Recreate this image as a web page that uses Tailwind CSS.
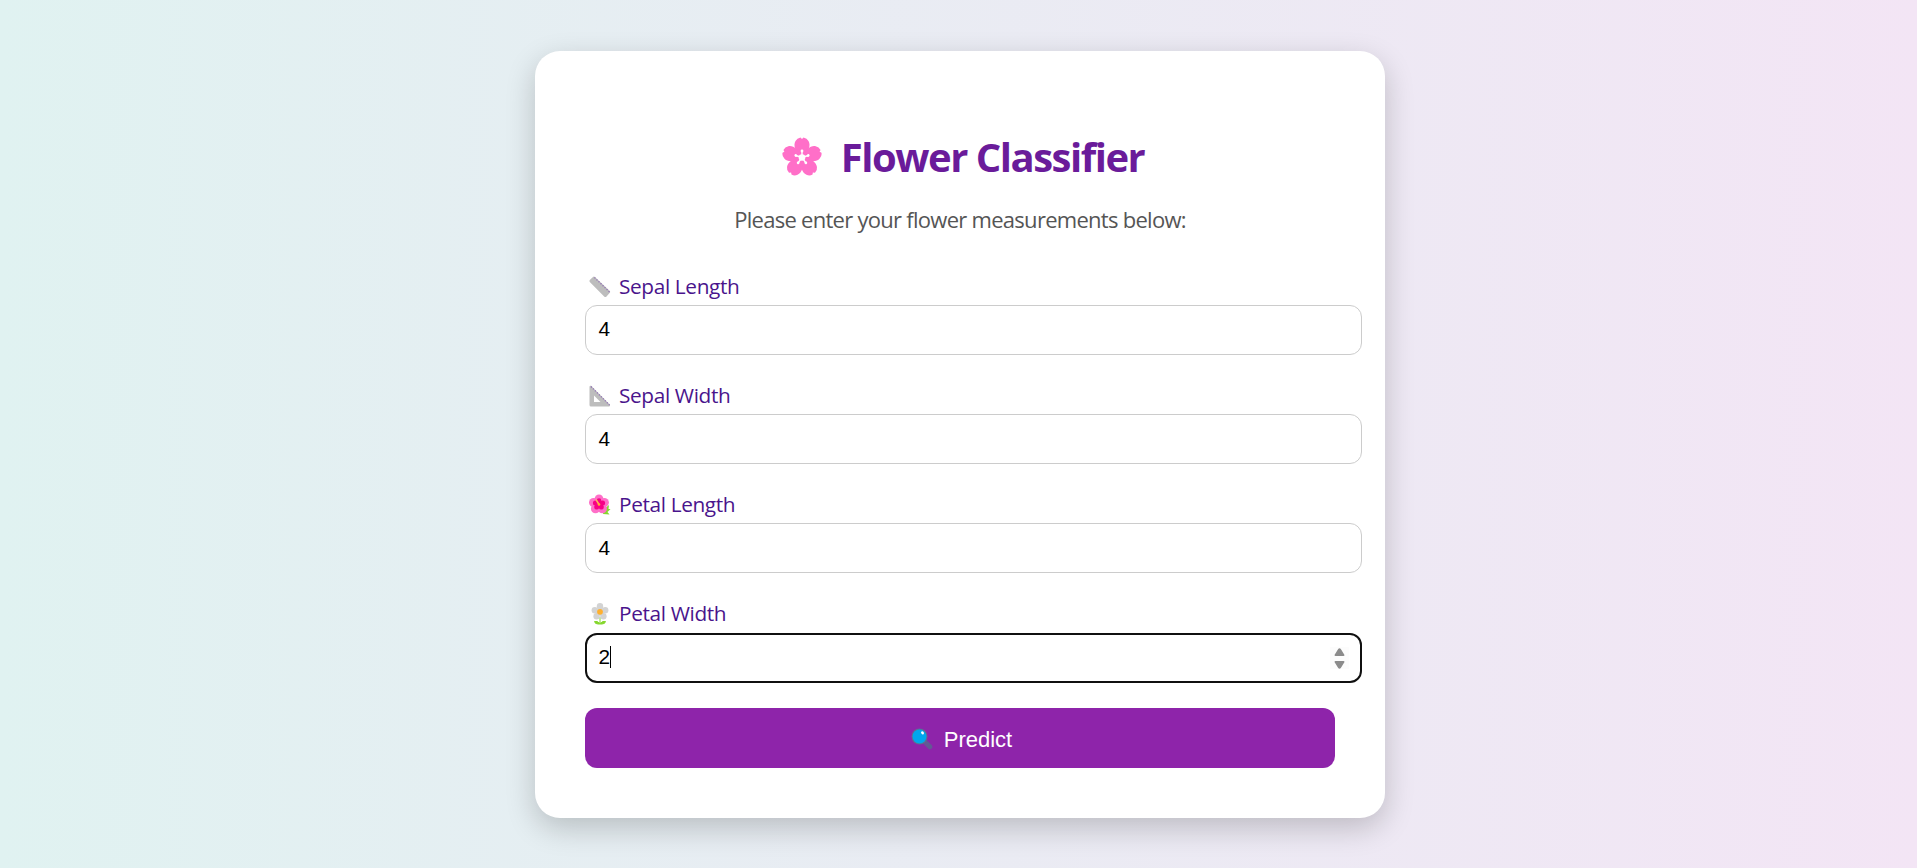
<!DOCTYPE html>
<html lang="en">
<head>
<meta charset="utf-8">
<title>Flower Classifier</title>
<script src="https://cdn.jsdelivr.net/npm/@tailwindcss/browser@4"></script>
</head>
<body class="h-[868px] overflow-hidden bg-linear-to-r/srgb from-[#e0f2f1] to-[#f3e5f5] pt-[51px] font-['Open_Sans',sans-serif]">
<svg class="hidden">
  <symbol id="blossom" viewBox="0 0 40 40">
    <g fill="#ff6fc8">
      <path id="petal" d="M20 20C13 15 11 8 13.500 4Q15 1 18.500 .5L20 2L21.500 .5Q25 1 26.500 4C29 8 27 15 20 20Z"/>
      <use href="#petal" transform="rotate(72 20 20.500)"/><use href="#petal" transform="rotate(144 20 20.500)"/><use href="#petal" transform="rotate(216 20 20.500)"/><use href="#petal" transform="rotate(288 20 20.500)"/>
    </g>
    <circle cx="20" cy="20.500" r="3.300" fill="#fff"/>
    <g stroke="#fff" stroke-width="1.400" fill="#fff">
      <g id="stamen"><path d="M20 20.500V14"/><circle cx="20" cy="14" r=".7"/></g>
      <use href="#stamen" transform="rotate(72 20 20.500)"/><use href="#stamen" transform="rotate(144 20 20.500)"/><use href="#stamen" transform="rotate(216 20 20.500)"/><use href="#stamen" transform="rotate(288 20 20.500)"/>
    </g>
  </symbol>
</svg>
<main class="ml-[535px] h-[767px] w-[850px] rounded-[25px] bg-white px-[50px] pt-[78px] shadow-[0_10px_30px_rgba(0,0,0,0.2)]">
  <h1 class="flex h-[56px] items-center justify-center pl-[6px] text-[40px] font-bold text-[#6a1b9a]">
    <svg class="mr-[19px] h-10 w-10 shrink-0"><use href="#blossom"/></svg><span class="whitespace-nowrap tracking-[-1.480px]">Flower Classifier</span>
  </h1>
  <p class="mt-[18px] flex h-[32px] items-center justify-center whitespace-nowrap text-[22px] tracking-[-0.720px] text-[#555]">Please enter your flower measurements below:</p>
  <form class="mt-[38px]">
    <div class="h-[109px]">
      <label class="flex h-[27px] items-center text-[20.800px] tracking-[-0.360px] text-[#4a148c]">
        <svg class="ml-[4px] mr-[8px] h-[22px] w-[22px]" viewBox="0 0 22 22"><path d="M.8 4L4 .9Q5 .1 5.900 .9L20.800 15Q21.600 16 20.800 16.800L17.300 20.700Q16.400 21.500 15.400 20.700L.8 6Q0 5 .8 4Z" fill="#bdbdbd"/><path d="M5.500 1.500L20.500 16" stroke="#9373b5" stroke-width="1.300" stroke-dasharray="1.300 1.500"/></svg><span class="whitespace-nowrap">Sepal Length</span>
      </label>
      <div class="mt-[5px] flex h-[50px] w-[777px] items-center rounded-[12px] border border-[#ccc] px-[12.500px] pb-[2px] font-['Liberation_Sans',sans-serif] text-[20.800px]">4</div>
    </div>
    <div class="h-[109px]">
      <label class="flex h-[27px] items-center text-[20.800px] tracking-[-0.360px] text-[#4a148c]">
        <svg class="ml-[4px] mr-[8px] h-[22px] w-[22px]" viewBox="0 0 22 22"><path fill-rule="evenodd" d="M.5 2Q.5.5 2 .8L21 19.700Q21.500 21.500 20 21.500H2Q.5 21.500.5 20ZM5 10.500V17H11.500Z" fill="#bdbdbd"/><path d="M2 1.500L20.500 20" stroke="#9373b5" stroke-width="1.300" stroke-dasharray="1.300 1.500"/></svg><span class="whitespace-nowrap">Sepal Width</span>
      </label>
      <div class="mt-[5px] flex h-[50px] w-[777px] items-center rounded-[12px] border border-[#ccc] px-[12.500px] font-['Liberation_Sans',sans-serif] text-[20.800px]">4</div>
    </div>
    <div class="h-[109px]">
      <label class="flex h-[27px] items-center text-[20.800px] tracking-[-0.360px] text-[#4a148c]">
        <svg class="ml-[4px] mr-[8px] h-[22px] w-[22px]" viewBox="0 0 22 22"><path d="M15 15L20 11L19.500 15L21.500 15L18.500 18L20.500 20.500L14 20Z" fill="#86d72f"/><g fill="#ff6fc8"><circle cx="10" cy="4.800" r="4.400"/><circle cx="15.300" cy="8.500" r="4.600"/><circle cx="13.300" cy="14.700" r="4.600"/><circle cx="6.500" cy="14.700" r="4.600"/><circle cx="4.600" cy="8.500" r="4.600"/></g><g fill="#f70086"><circle cx="10" cy="6.500" r="2.300"/><circle cx="13.600" cy="9" r="2.500"/><circle cx="12.300" cy="13" r="2.500"/><circle cx="7.700" cy="13" r="2.500"/><circle cx="6.400" cy="9" r="2.500"/><circle cx="10" cy="10.300" r="3"/></g><path d="M10 10.500L7 5.500" stroke="#ffb35a" stroke-width="1.500"/><circle cx="10" cy="10.500" r="1.300" fill="#ffb02e"/></svg><span class="whitespace-nowrap">Petal Length</span>
      </label>
      <div class="mt-[5px] flex h-[50px] w-[777px] items-center rounded-[12px] border border-[#ccc] px-[12.500px] font-['Liberation_Sans',sans-serif] text-[20.800px]">4</div>
    </div>
    <div class="h-[110px]">
      <label class="flex h-[27px] items-center text-[20.800px] tracking-[-0.360px] text-[#4a148c]">
        <svg class="ml-[4px] mr-[8px] h-[22px] w-[22px]" viewBox="0 0 22 22"><path d="M11 14V20M5.500 18.500Q8 17.500 11 20.500Q14 17.500 16.500 18.500Q16 21 13 21H9Q6 21 5.500 18.500Z" fill="#86d72f" stroke="#86d72f"/><g fill="#d3d3d3"><circle cx="11" cy="3.300" r="3.200"/><circle cx="16.200" cy="7.200" r="3.200"/><circle cx="14.400" cy="13.200" r="3.200"/><circle cx="7.600" cy="13.200" r="3.200"/><circle cx="5.800" cy="7.200" r="3.200"/><circle cx="11" cy="8.800" r="4"/></g><circle cx="11" cy="8.800" r="2.900" fill="#ffb02e"/></svg><span class="whitespace-nowrap">Petal Width</span>
      </label>
      <div class="mt-[6px] flex h-[50px] w-[777px] items-center rounded-[12px] border-2 border-[#101010] pl-[11.500px] pr-[11px] font-['Liberation_Sans',sans-serif] text-[20.800px]"><span class="relative -top-px">2</span><span class="relative -top-px h-[22px] w-px bg-black"></span>
        <svg class="ml-auto h-[22px] w-[19px] bg-[#fcfcfc]" viewBox="0 0 19 22"><path d="M4.500 8L8.200 2Q9.500.5 10.800 2L14.500 8Q14.500 9 13.500 9H5.500Q4.500 9 4.500 8ZM4.500 15L8.200 21Q9.500 22.500 10.800 21L14.500 15Q14.500 14 13.500 14H5.500Q4.500 14 4.500 15Z" fill="#8b8b8b"/></svg>
      </div>
    </div>
    <button type="button" class="-mt-[2px] flex h-[60px] w-[750px] items-center justify-center rounded-[12px] bg-[#8e24aa] pl-[3px] pt-[2px] font-['Liberation_Sans',sans-serif] text-[22px] text-white">
      <svg class="mr-[11px] h-[22px] w-[22px]" viewBox="0 0 22 22"><path d="M13.500 13.500L18.800 18.800" stroke="#635994" stroke-width="5" stroke-linecap="round"/><circle cx="8.500" cy="8.500" r="8" fill="#5d6f91"/><circle cx="8.500" cy="8.500" r="6.900" fill="#00a6ed"/><ellipse cx="11.500" cy="4.800" rx="1.300" ry="1.700" fill="#fff" transform="rotate(-35 11.500 4.800)"/></svg>Predict
    </button>
  </form>
</main>
</body>
</html>
